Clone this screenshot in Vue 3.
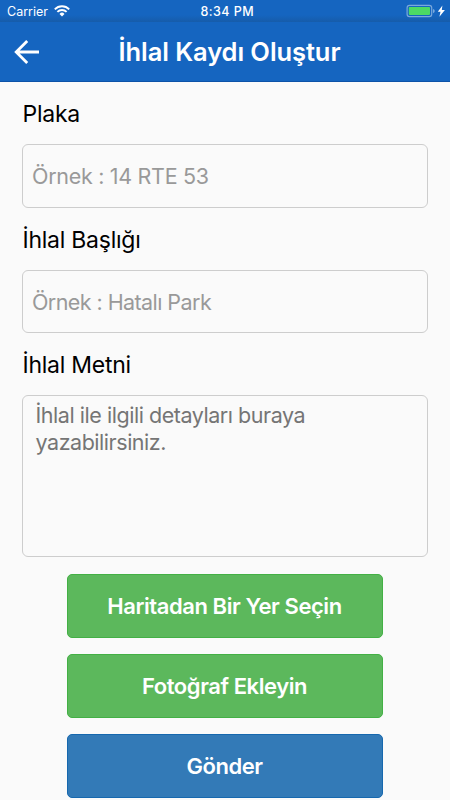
<script setup>
import { ref } from 'vue'

const plate = ref('')
const title = ref('')
const body = ref('')
</script>

<template>
  <div class="screen">
    <div class="status">
      <div class="carrier">
        <span>Carrier</span>
        <svg class="wifi" viewBox="0 0 16 12" width="16" height="12">
          <path d="M0.8 4.3 A10 10 0 0 1 15.2 4.3" />
          <path d="M3.4 6.9 A6.4 6.4 0 0 1 12.6 6.9" />
          <path class="dot" d="M5.5 8.9 A3.5 3.5 0 0 1 10.5 8.9 L8 11.5 Z" />
        </svg>
      </div>
      <span class="clock">8:34 PM</span>
      <div class="power">
        <svg viewBox="0 0 39 14" width="39" height="14">
          <rect class="shell" x="1.1" y="1.4" width="24.6" height="11.2" rx="2.4" />
          <rect class="charge" x="2.8" y="3.1" width="21.2" height="7.8" rx="0.8" />
          <path class="cap" d="M27 5 Q28.8 5.5 28.8 7.1 Q28.8 8.7 27 9.2 Z" />
          <path class="bolt" d="M36.4 1.4 L31.8 7.7 H34.5 L33.4 12.8 L38.9 6 H35.8 Z" />
        </svg>
      </div>
    </div>

    <header class="bar">
      <svg class="back" viewBox="0 0 26 26" width="26" height="26">
        <path d="M25 13 H2.4 M13.2 2 L2.2 13 L13.2 24" />
      </svg>
      <h1>İhlal Kaydı Oluştur</h1>
    </header>

    <form class="form" @submit.prevent>
      <label for="plate">Plaka</label>
      <input id="plate" v-model="plate" class="plate" placeholder="Örnek : 14 RTE 53" />
      <label for="title">İhlal Başlığı</label>
      <input id="title" v-model="title" class="title" placeholder="Örnek : Hatalı Park" />
      <label for="body">İhlal Metni</label>
      <textarea id="body" v-model="body" placeholder="İhlal ile ilgili detayları buraya yazabilirsiniz."></textarea>
      <div class="actions">
        <button type="button" class="green">Haritadan Bir Yer Seçin</button>
        <button type="button" class="green">Fotoğraf Ekleyin</button>
        <button type="submit" class="blue">Gönder</button>
      </div>
    </form>
  </div>
</template>

<style>
body {
  margin: 0;
  background: #fafafa;
}
</style>

<style scoped>
.screen {
  width: 450px;
  height: 800px;
  overflow: hidden;
  background: #fafafa;
  font-family: Inter, "Liberation Sans", sans-serif;
  color: #000;
}
.status {
  height: 22px;
  display: grid;
  grid-template-columns: 1fr auto 1fr;
  align-items: center;
  box-sizing: border-box;
  padding: 0 5px 0 7px;
  background: linear-gradient(#1565c0 0, #1565c0 15px, #165caa 22px);
  color: #fff;
  font-size: 12.5px;
}
.carrier {
  display: flex;
  align-items: center;
  gap: 6px;
}
.wifi path {
  fill: none;
  stroke: #fff;
  stroke-width: 1.9;
}
.wifi .dot {
  fill: #fff;
  stroke: none;
}
.clock {
  padding-left: 2.5px;
  font-weight: 500;
  letter-spacing: 0.45px;
}
.power {
  display: flex;
  justify-content: flex-end;
}
.shell {
  fill: none;
  stroke: #7ba9dc;
  stroke-width: 1.2;
}
.charge {
  fill: #4cd964;
}
.cap {
  fill: #7ba9dc;
}
.bolt {
  fill: #fff;
}
.bar {
  height: 60px;
  display: grid;
  grid-template-columns: 45px 1fr 36px;
  align-items: center;
  padding: 0 14px;
  box-sizing: border-box;
  background: #1565c0;
  border-bottom: 1px solid #0d52a8;
}
.back path {
  fill: none;
  stroke: #fff;
  stroke-width: 2.8;
}
h1 {
  margin: 0;
  text-align: center;
  color: #fff;
  font-size: 25.5px;
  font-weight: 600;
  letter-spacing: -0.08px;
  white-space: nowrap;
}
.form {
  display: flex;
  flex-direction: column;
  padding: 0 22px;
}
label {
  height: 62px;
  display: flex;
  align-items: center;
  box-sizing: border-box;
  padding: 2px 0 0 0.5px;
  font-size: 23px;
  letter-spacing: -0.25px;
}
input,
textarea {
  box-sizing: border-box;
  width: 406px;
  margin: 0;
  border: 1px solid #cdcdcd;
  border-radius: 6px;
  background: transparent;
  font-family: inherit;
  font-size: 21.5px;
  outline: none;
  resize: none;
}
input {
  padding: 0 9px;
}
.plate {
  height: 64px;
  letter-spacing: -0.3px;
}
.title {
  height: 63px;
  letter-spacing: -0.57px;
}
textarea {
  height: 162px;
  padding: 6px 12.5px;
  line-height: 27px;
  letter-spacing: -0.46px;
}
input::placeholder {
  color: #999;
  opacity: 1;
}
textarea::placeholder {
  color: #757575;
  opacity: 1;
}
.actions {
  display: flex;
  flex-direction: column;
  align-items: center;
  gap: 16px;
  padding-top: 17px;
}
button {
  width: 316px;
  height: 64px;
  box-sizing: border-box;
  padding: 0 1px 0 0;
  border-radius: 5px;
  color: #fff;
  font-family: inherit;
  font-size: 22px;
  font-weight: 600;
  letter-spacing: -0.43px;
}
.green {
  background: #5cb85c;
  border: 1px solid #43b045;
}
.blue {
  background: #337ab7;
  border: 1px solid #1668ae;
}
</style>
